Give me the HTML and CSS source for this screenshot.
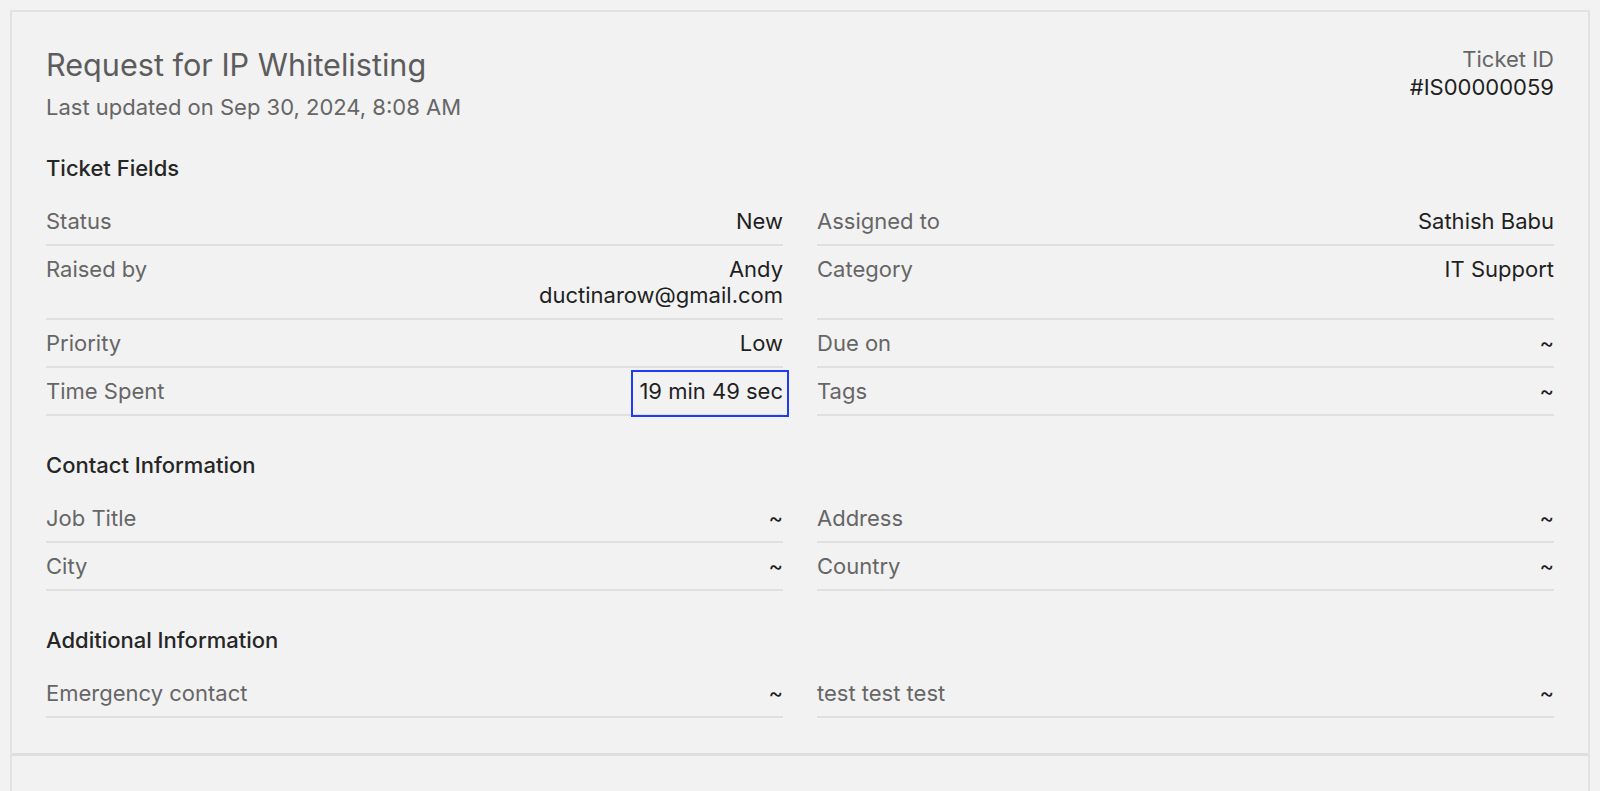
FILE: index.html
```html
<!DOCTYPE html>
<html lang="en">
<head>
  <meta charset="UTF-8" />
  <meta name="viewport" content="width=device-width, initial-scale=1.0"/>
  <title>Ticket #IS00000059</title>
  <link rel="stylesheet" href="styles.css">
</head>
<body>

  <div class="card">
    <div class="ticket-body">

      <header class="ticket-header">
        <div>
          <h1>Request for IP Whitelisting</h1>
          <p class="updated">Last updated on Sep 30, 2024, 8:08 AM</p>
        </div>
        <div class="ticket-id">
          <div class="ticket-id-label">Ticket ID</div>
          <div class="ticket-id-value">#IS00000059</div>
        </div>
      </header>

      <!-- Ticket Fields -->
      <section class="section">
        <h2>Ticket Fields</h2>
        <div class="fields">
          <div class="field"><span class="label">Status</span><span class="value">New</span></div>
          <div class="field"><span class="label">Assigned to</span><span class="value">Sathish Babu</span></div>
          <div class="field"><span class="label">Raised by</span><span class="value">Andy<br>ductinarow@gmail.com</span></div>
          <div class="field"><span class="label">Category</span><span class="value">IT Support</span></div>
          <div class="field"><span class="label">Priority</span><span class="value">Low</span></div>
          <div class="field"><span class="label">Due on</span><span class="value">~</span></div>
          <div class="field"><span class="label">Time Spent</span><span class="value focused">19 min 49 sec</span></div>
          <div class="field"><span class="label">Tags</span><span class="value">~</span></div>
        </div>
      </section>

      <!-- Contact Information -->
      <section class="section">
        <h2>Contact Information</h2>
        <div class="fields">
          <div class="field"><span class="label">Job Title</span><span class="value">~</span></div>
          <div class="field"><span class="label">Address</span><span class="value">~</span></div>
          <div class="field"><span class="label">City</span><span class="value">~</span></div>
          <div class="field"><span class="label">Country</span><span class="value">~</span></div>
        </div>
      </section>

      <!-- Additional Information -->
      <section class="section">
        <h2>Additional Information</h2>
        <div class="fields">
          <div class="field"><span class="label">Emergency contact</span><span class="value">~</span></div>
          <div class="field"><span class="label">test test test</span><span class="value">~</span></div>
        </div>
      </section>

    </div>
    <div class="card-footer"></div>
  </div>

</body>
</html>
```

FILE: styles.css
```css
* {
  margin: 0;
  padding: 0;
  box-sizing: border-box;
}

html, body {
  height: 100%;
}

body {
  background: #f2f2f2;
  font-family: Inter, 'Noto Sans', sans-serif;
  font-size: 22px;
  color: #1f1f1f;
  padding: 10px 10px 0 10px;
  overflow: hidden;
}

.card {
  border: 2px solid #e2e2e2;
  border-bottom: none;
  min-height: 100%;
}

.ticket-body {
  padding: 35px 34px 35px 34px;
}

.ticket-header {
  display: flex;
  justify-content: space-between;
  align-items: flex-start;
}

.ticket-header h1 {
  font-size: 30.6px;
  font-weight: 400;
  line-height: 36px;
  color: #5c5c5c;
}

.updated {
  margin-top: 11px;
  line-height: 26px;
  color: #666;
}

.ticket-id {
  text-align: right;
  line-height: 28px;
  margin-top: -2px;
}

.ticket-id-label {
  color: #666;
}

.ticket-id-value {
  color: #1f1f1f;
}

.section {
  margin-top: 35px;
}

.section + .section {
  margin-top: 36px;
}

.section h2 {
  font-size: 22px;
  font-weight: 500;
  line-height: 26px;
  color: #262626;
  margin-bottom: 17px;
}

.fields {
  display: grid;
  grid-template-columns: 1fr 1fr;
  column-gap: 34px;
}

.field {
  display: flex;
  justify-content: space-between;
  align-items: flex-start;
  padding: 10px 0;
  line-height: 26px;
  border-bottom: 2px solid #e0e0e0;
}

.label {
  color: #666;
}

.value {
  text-align: right;
  color: #1f1f1f;
}

/* focus ring around the time value */
.value.focused {
  position: relative;
}

.value.focused::after {
  content: '';
  position: absolute;
  top: -8px;
  bottom: -13px;
  left: -8px;
  right: -6px;
  border: 2px solid #1d3cf4;
}

.card-footer {
  border-top: 3px solid #dedede;
  height: 60px;
}
```
